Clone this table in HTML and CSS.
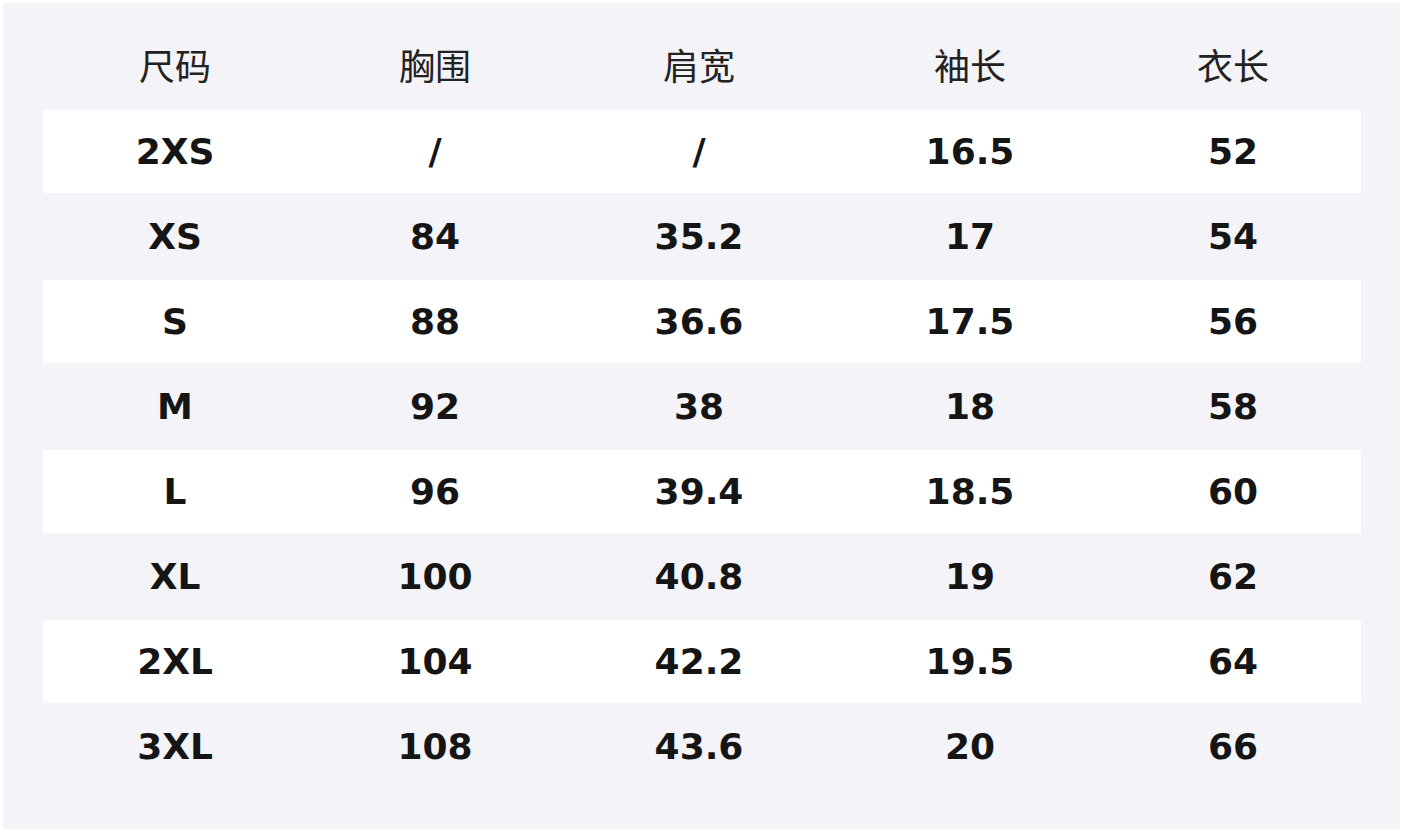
FILE: index.html
```html
<!DOCTYPE html>
<html lang="zh">
<head>
<meta charset="utf-8">
<title>尺码表</title>
<link rel="stylesheet" href="styles.css">
</head>
<body>
<div class="panel">
  <div class="row head"><div>尺码</div><div>胸围</div><div>肩宽</div><div>袖长</div><div>衣长</div></div>
  <div class="row odd"><div>2XS</div><div>/</div><div>/</div><div>16.5</div><div>52</div></div>
  <div class="row"><div>XS</div><div>84</div><div>35.2</div><div>17</div><div>54</div></div>
  <div class="row odd"><div>S</div><div>88</div><div>36.6</div><div>17.5</div><div>56</div></div>
  <div class="row"><div>M</div><div>92</div><div>38</div><div>18</div><div>58</div></div>
  <div class="row odd"><div>L</div><div>96</div><div>39.4</div><div>18.5</div><div>60</div></div>
  <div class="row"><div>XL</div><div>100</div><div>40.8</div><div>19</div><div>62</div></div>
  <div class="row odd"><div>2XL</div><div>104</div><div>42.2</div><div>19.5</div><div>64</div></div>
  <div class="row"><div>3XL</div><div>108</div><div>43.6</div><div>20</div><div>66</div></div>
</div>
</body>
</html>
```
FILE: styles.css
```css
html, body {
  margin: 0;
  padding: 0;
  background: #ffffff;
}
body {
  height: 833px;
  overflow: hidden;
}
.panel {
  margin: 3px 4px 4px 3px;
  height: 826px;
  box-sizing: border-box;
  padding: 40px 39px 40px 40px;
  background: #f3f3f8;
}
.row {
  display: grid;
  grid-template-columns: 264px 256px 272px 270px 256px;
  width: 1318px;
  height: 83px;
  margin-top: 2px;
  align-items: center;
  text-align: center;
  font-family: "DejaVu Sans", "Noto Sans CJK SC", sans-serif;
  font-weight: bold;
  font-size: 36px;
  color: #151515;
}
.row.odd {
  background: #ffffff;
}
.row.head {
  margin-top: 0;
  height: 65px;
  align-items: start;
  font-family: "Noto Sans CJK SC", sans-serif;
  font-weight: normal;
  font-size: 36px;
  line-height: 42px;
  color: #222222;
}
```
